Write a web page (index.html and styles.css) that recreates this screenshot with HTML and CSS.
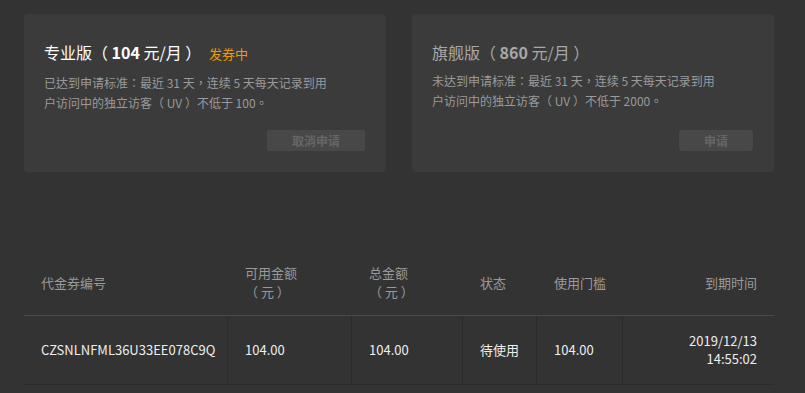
FILE: index.html
```html
<!DOCTYPE html>
<html>
<head>
<meta charset="utf-8">
<link rel="stylesheet" href="styles.css">
</head>
<body>
<div class="page">
  <div class="plans">
    <div class="card">
      <div class="title">专业版（ <b>104</b> 元/月 ） <span class="tag">发券中</span></div>
      <p class="desc">已达到申请标准：最近 31 天，连续 5 天每天记录到用户访问中的独立访客（ UV ）不低于 100。</p>
      <div class="actions"><button class="btn btn-wide" disabled>取消申请</button></div>
    </div>
    <div class="card">
      <div class="title title-muted">旗舰版（ <b>860</b> 元/月 ）</div>
      <p class="desc">未达到申请标准：最近 31 天，连续 5 天每天记录到用户访问中的独立访客（ UV ）不低于 2000。</p>
      <div class="actions"><button class="btn" disabled>申请</button></div>
    </div>
  </div>

  <div class="table">
    <div class="row head">
      <div class="cell">代金券编号</div>
      <div class="cell">可用金额<br>（ 元 ）</div>
      <div class="cell">总金额<br>（ 元 ）</div>
      <div class="cell">状态</div>
      <div class="cell">使用门槛</div>
      <div class="cell right">到期时间</div>
    </div>
    <div class="row body">
      <div class="cell">CZSNLNFML36U33EE078C9Q</div>
      <div class="cell">104.00</div>
      <div class="cell">104.00</div>
      <div class="cell">待使用</div>
      <div class="cell">104.00</div>
      <div class="cell right">2019/12/13<br>14:55:02</div>
    </div>
  </div>
</div>
</body>
</html>
```

FILE: styles.css
```css
* { box-sizing: border-box; }
html, body {
  margin: 0;
  background: #333333;
}
body {
  font-family: "Noto Sans CJK TC", "Noto Sans CJK SC", sans-serif;
  color: #eeeeee;
}
.page {
  width: 750px;
  margin-left: 24px;
  padding-top: 14px;
}
.plans {
  display: flex;
  gap: 26px;
}
.card {
  width: 362px;
  height: 158px;
  background: #3b3b3b;
  border-radius: 4px;
  padding: 26px 21px 21px 20px;
  display: flex;
  flex-direction: column;
}
.title {
  font-size: 16px;
  line-height: 24px;
  color: #ffffff;
  white-space: nowrap;
}
.title b { font-weight: 700; }
.title-muted { color: #a8a8a8; }
.tag {
  font-size: 13px;
  color: #f39800;
  margin-left: 4px;
}
.desc {
  margin: 7px 0 0;
  max-width: 288px;
  font-size: 12px;
  line-height: 20px;
  color: #9a9a9a;
}
.actions {
  margin-top: auto;
  display: flex;
  justify-content: flex-end;
}
.btn {
  width: 74px;
  height: 21px;
  border: 0;
  border-radius: 3px;
  background: #484848;
  color: #666666;
  font-family: inherit;
  font-size: 12px;
  font-weight: 700;
  line-height: 21px;
  padding: 0;
}
.btn-wide { width: 98px; }

.table {
  margin-top: 77px;
  font-size: 13px;
}
.row {
  display: grid;
  grid-template-columns: 204px 124px 111px 74px 86px 151px;
}
.head {
  height: 67px;
  border-bottom: 1px solid #4a4a4a;
  color: #9a9a9a;
  line-height: 19px;
}
.body {
  height: 69px;
  border-bottom: 1px solid #2b2b2b;
  line-height: 18px;
  color: #eeeeee;
}
.cell {
  display: flex;
  flex-direction: column;
  justify-content: center;
  padding: 0 17px;
}
.body .cell {
  border-right: 1px solid #2b2b2b;
}
.body .cell:last-child { border-right: 0; }
.cell.right {
  text-align: right;
  align-items: flex-end;
}
```
